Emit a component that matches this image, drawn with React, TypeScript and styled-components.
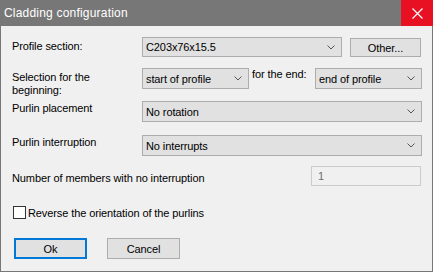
import styled, { createGlobalStyle } from "styled-components";

const GlobalStyle = createGlobalStyle`
  html, body {
    margin: 0;
    padding: 0;
    background: #f0f0f0;
  }
  body {
    font-family: "Liberation Sans", Arial, sans-serif;
    font-size: 11px;
    letter-spacing: -0.1px;
    color: #000;
  }
`;

const Window = styled.div`
  width: 433px;
  height: 272px;
  box-sizing: border-box;
  background: #f0f0f0;
  border: 1px solid #777777;
  border-top: none;
  display: flex;
  flex-direction: column;
`;

const TitleBar = styled.div`
  height: 26px;
  margin: 0 -1px;
  background: #777777;
  display: flex;
  align-items: center;
  justify-content: space-between;
`;

const Title = styled.span`
  color: #ffffff;
  font-size: 12px;
  letter-spacing: 0.2px;
  padding-left: 4px;
`;

const CloseButton = styled.div`
  width: 32px;
  height: 26px;
  background: #e81123;
  display: flex;
  align-items: center;
  justify-content: center;
`;

const Body = styled.div`
  display: flex;
  flex-direction: column;
  padding: 0 11px 0 11px;
`;

const Row = styled.div<{ $top: number; $height: number }>`
  display: flex;
  align-items: flex-start;
  height: ${(p) => p.$height}px;
  margin-top: ${(p) => p.$top}px;
`;

const Label = styled.div<{ $pad?: number; $width?: number }>`
  width: ${(p) => p.$width ?? 130}px;
  flex-shrink: 0;
  line-height: 13px;
  white-space: nowrap;
  padding-top: ${(p) => p.$pad ?? 0}px;
`;

const Combo = styled.div<{ $width: number; $height?: number }>`
  box-sizing: border-box;
  flex-shrink: 0;
  width: ${(p) => p.$width}px;
  height: ${(p) => p.$height ?? 21}px;
  background: #e1e1e1;
  border: 1px solid #adadad;
  display: flex;
  align-items: center;
  justify-content: space-between;
  padding: 0 6px 0 3px;
  white-space: nowrap;
`;

const InlineText = styled.span`
  width: 66px;
  box-sizing: border-box;
  padding-left: 3px;
  line-height: 13px;
  white-space: nowrap;
  flex-shrink: 0;
`;

const OtherButton = styled.div`
  box-sizing: border-box;
  width: 72px;
  height: 19px;
  margin-left: 8px;
  margin-top: 1px;
  background: #e1e1e1;
  border: 1px solid #adadad;
  display: flex;
  align-items: center;
  justify-content: center;
`;

const NumberInput = styled.div`
  box-sizing: border-box;
  width: 110px;
  height: 20px;
  margin-left: auto;
  border: 1px solid #cccccc;
  background: #f0f0f0;
  color: #6d6d6d;
  display: flex;
  align-items: center;
  padding-left: 6px;
`;

const CheckRow = styled.label`
  display: flex;
  align-items: center;
  height: 13px;
  margin-top: 20px;
  margin-left: 1px;
`;

const CheckBox = styled.span`
  box-sizing: border-box;
  width: 13px;
  height: 13px;
  border: 1px solid #333333;
  background: #ffffff;
  margin-right: 2px;
`;

const ButtonRow = styled.div`
  display: flex;
  gap: 20px;
  margin-top: 19px;
  margin-left: 2px;
`;

const DialogButton = styled.div<{ $default?: boolean }>`
  box-sizing: border-box;
  width: 73px;
  height: 21px;
  background: #e1e1e1;
  border: ${(p) => (p.$default ? "2px solid #0078d7" : "1px solid #adadad")};
  display: flex;
  align-items: center;
  justify-content: center;
`;

const Chevron = () => (
  <svg width="8" height="5" viewBox="0 0 8 5">
    <polyline points="0.5,0.5 4,4 7.5,0.5" fill="none" stroke="#555555" strokeWidth="1" />
  </svg>
);

const Select = ({ value, width, height }: { value: string; width: number; height?: number }) => (
  <Combo $width={width} $height={height}>
    <span>{value}</span>
    <Chevron />
  </Combo>
);

const App = () => (
  <>
    <GlobalStyle />
    <Window>
      <TitleBar>
        <Title>Cladding configuration</Title>
        <CloseButton>
          <svg width="11" height="11" viewBox="0 0 11 11">
            <path d="M0.5 0.5 L10.5 10.5 M10.5 0.5 L0.5 10.5" stroke="#ffffff" strokeWidth="1.2" />
          </svg>
        </CloseButton>
      </TitleBar>
      <Body>
        <Row $top={11} $height={20}>
          <Label $pad={3}>Profile section:</Label>
          <Select value="C203x76x15.5" width={200} height={20} />
          <OtherButton>Other...</OtherButton>
        </Row>
        <Row $top={11} $height={21}>
          <Label $pad={3}>
            Selection for the
            <br />
            beginning:
          </Label>
          <Select value="start of profile" width={107} height={21} />
          <InlineText>for the end:</InlineText>
          <Select value="end of profile" width={107} height={21} />
        </Row>
        <Row $top={12} $height={21}>
          <Label $pad={1}>Purlin placement</Label>
          <Select value="No rotation" width={280} />
        </Row>
        <Row $top={13} $height={21}>
          <Label $pad={1}>Purlin interruption</Label>
          <Select value="No interrupts" width={280} />
        </Row>
        <Row $top={10} $height={20}>
          <Label $pad={6} $width={260}>
            Number of members with no interruption
          </Label>
          <NumberInput>1</NumberInput>
        </Row>
        <CheckRow>
          <CheckBox />
          Reverse the orientation of the purlins
        </CheckRow>
        <ButtonRow>
          <DialogButton $default>Ok</DialogButton>
          <DialogButton>Cancel</DialogButton>
        </ButtonRow>
      </Body>
    </Window>
  </>
);

export default App;
